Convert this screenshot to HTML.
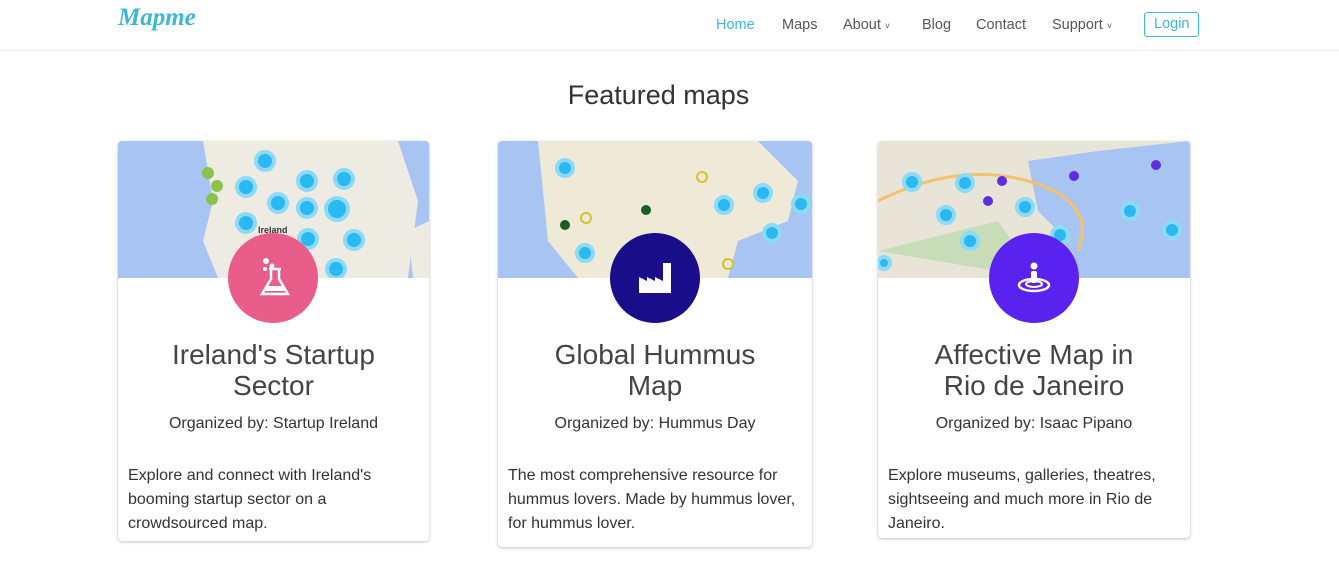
<!DOCTYPE html>
<html><head><meta charset="utf-8"><style>
*{margin:0;padding:0;box-sizing:border-box}
body{width:1339px;height:574px;background:#fff;font-family:"Liberation Sans",sans-serif;color:#333;position:relative;overflow:hidden}
.nav{position:absolute;left:0;top:0;width:1339px;height:51px;border-bottom:1px solid #eee}
.logo{position:absolute;left:118px;top:4px;font-family:"Liberation Serif",serif;font-style:italic;font-weight:bold;font-size:25px;color:#3bb8d9}
.nav a{position:absolute;top:17px;font-size:14.5px;color:#555;text-decoration:none}
.login{border:1px solid #3bb8d9;border-radius:3px;padding:3px 9px 4px;color:#3bb8d9!important;top:12px!important}
h1{position:absolute;top:80px;left:-11px;width:1339px;text-align:center;font-weight:normal;font-size:27px;color:#333}
.card{position:absolute;top:141px;border-radius:4px;box-shadow:0 1px 3px rgba(0,0,0,.25);background:#fff;overflow:hidden}
.map{position:absolute;left:0;top:0;width:100%;height:137px}
.circ{position:absolute;width:90px;height:90px;border-radius:50%;margin-left:-45px}
.t{position:absolute;top:198px;left:0;width:100%;text-align:center;font-size:28px;line-height:31px;color:#444}
.o{position:absolute;top:274px;left:0;width:100%;text-align:center;font-size:16px}
.d{position:absolute;top:323px;left:10px;right:10px;font-size:16px;line-height:24px}
</style></head><body>
<div class="nav">
<div class="logo">Mapme</div>
<a style="left:716px;color:#3bb8d9">Home</a>
<a style="left:782px">Maps</a>
<a style="left:843px">About <small style="font-size:9px">˅</small></a>
<a style="left:922px">Blog</a>
<a style="left:976px">Contact</a>
<a style="left:1052px">Support <small style="font-size:9px">˅</small></a>
<a class="login" style="left:1144px">Login</a>
</div>
<h1>Featured maps</h1>

<div class="card" style="left:118px;width:311px;height:400px">
<svg class="map" viewBox="0 0 311 137"><rect width="311" height="137" fill="#a7c4f2"/><path d="M85 0 L280 0 L300 60 L290 137 L100 137 L85 100 L95 60Z" fill="#eeebe2"/><path d="M290 90 L311 80 L311 137 L295 137Z" fill="#eeebe2"/>
<g fill="#29b8f0" stroke="#8ddaf7" stroke-width="4"><circle cx="147" cy="20" r="9"/><circle cx="128" cy="46" r="9"/><circle cx="160" cy="62" r="9"/><circle cx="189" cy="40" r="9"/><circle cx="226" cy="38" r="9"/><circle cx="189" cy="67" r="9"/><circle cx="219" cy="68" r="11"/><circle cx="128" cy="82" r="9"/><circle cx="190" cy="98" r="9"/><circle cx="236" cy="99" r="9"/><circle cx="218" cy="128" r="9"/></g>
<g fill="#8bc34a"><circle cx="90" cy="32" r="6"/><circle cx="99" cy="45" r="6"/><circle cx="94" cy="58" r="6"/></g>
<text x="140" y="92" font-size="9" font-weight="bold" fill="#333" font-family="Liberation Sans">Ireland</text></svg>
<div class="circ" style="left:155px;top:92px;background:#e95d8a"><svg width="90" height="90" viewBox="0 0 90 90"><circle cx="38" cy="28" r="3" fill="#fff"/><circle cx="44" cy="33" r="2.5" fill="#fff"/><circle cx="37" cy="36" r="2" fill="#fff"/><path d="M41 36h12M43 36v10l-9 15h26l-9-15V36" fill="none" stroke="#fff" stroke-width="2.5"/><path d="M37 58l3-5h14l3 5z" fill="#fff"/></svg></div>
<div class="t">Ireland's Startup<br>Sector</div>
<div class="o">Organized by: Startup Ireland</div>
<div class="d">Explore and connect with Ireland's booming startup sector on a crowdsourced map.</div>
</div>

<div class="card" style="left:498px;width:314px;height:406px">
<svg class="map" viewBox="0 0 314 137"><rect width="314" height="137" fill="#a7c4f2"/><path d="M40 0 L260 0 L300 40 L290 80 L240 100 L230 137 L80 137 L50 100 Z" fill="#efe9d8"/>
<g fill="#29b8f0" stroke="#8ddaf7" stroke-width="4"><circle cx="67" cy="27" r="8"/><circle cx="226" cy="64" r="8"/><circle cx="265" cy="52" r="8"/><circle cx="303" cy="63" r="8"/><circle cx="274" cy="92" r="8"/><circle cx="87" cy="112" r="8"/></g>
<g fill="none" stroke="#d4c42a" stroke-width="2"><circle cx="88" cy="77" r="5"/><circle cx="204" cy="36" r="5"/><circle cx="230" cy="123" r="5"/><circle cx="125" cy="122" r="5"/></g>
<g fill="#1b5e20"><circle cx="148" cy="69" r="5"/><circle cx="67" cy="84" r="5"/></g></svg>
<div class="circ" style="left:157px;top:92px;background:#1a0d8a"><svg width="90" height="90" viewBox="0 0 90 90"><path d="M29 60V44l8 4v-4l8 4v-4l8 4V30h8v30z" fill="#fff"/></svg></div>
<div class="t">Global Hummus<br>Map</div>
<div class="o">Organized by: Hummus Day</div>
<div class="d">The most comprehensive resource for hummus lovers. Made by hummus lover, for hummus lover.</div>
</div>

<div class="card" style="left:878px;width:312px;height:397px">
<svg class="map" viewBox="0 0 312 137"><rect width="312" height="137" fill="#e8e4d8"/><path d="M150 20 L220 10 L312 0 L312 137 L200 137 L180 90 L160 70Z" fill="#a7c4f2"/><path d="M0 60 Q80 20 150 40 T200 110" stroke="#f3c26a" stroke-width="3" fill="none"/><path d="M0 110 L120 80 L160 137" fill="#c8dcb8"/>
<g fill="#29b8f0" stroke="#8ddaf7" stroke-width="4"><circle cx="34" cy="41" r="8"/><circle cx="87" cy="42" r="8"/><circle cx="68" cy="74" r="8"/><circle cx="92" cy="100" r="8"/><circle cx="147" cy="66" r="8"/><circle cx="182" cy="94" r="8"/><circle cx="252" cy="70" r="8"/><circle cx="294" cy="89" r="8"/><circle cx="6" cy="122" r="6"/></g>
<g fill="#5b2ee0"><circle cx="124" cy="40" r="5"/><circle cx="110" cy="60" r="5"/><circle cx="278" cy="24" r="5"/><circle cx="196" cy="35" r="5"/></g></svg>
<div class="circ" style="left:156px;top:92px;background:#5a22ee"><svg width="90" height="90" viewBox="0 0 90 90"><circle cx="45" cy="33" r="3.5" fill="#fff"/><rect x="42" y="38" width="6" height="12" rx="2" fill="#fff"/><ellipse cx="45" cy="52" rx="15" ry="6" fill="none" stroke="#fff" stroke-width="2.5"/><ellipse cx="45" cy="51" rx="8" ry="3" fill="none" stroke="#fff" stroke-width="2"/></svg></div>
<div class="t">Affective Map in<br>Rio de Janeiro</div>
<div class="o">Organized by: Isaac Pipano</div>
<div class="d">Explore museums, galleries, theatres, sightseeing and much more in Rio de Janeiro.</div>
</div>
</body></html>
